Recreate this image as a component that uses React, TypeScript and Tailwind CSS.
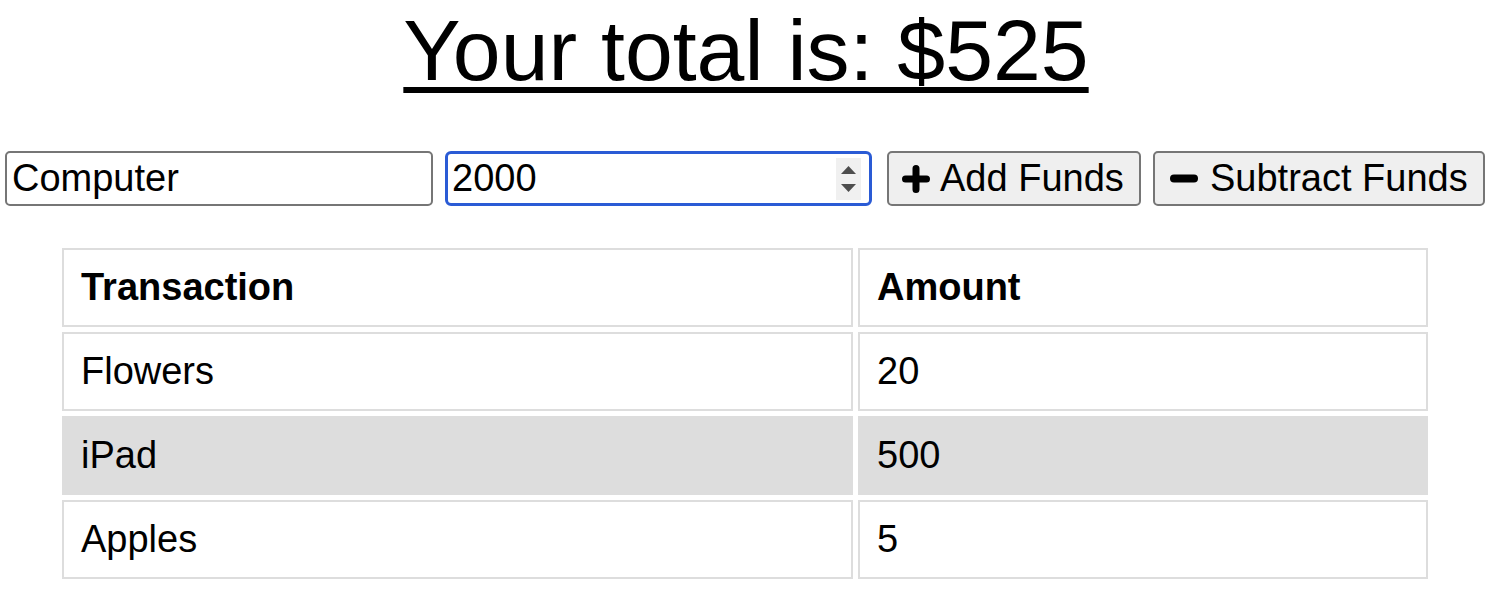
import React, { useState } from 'react';

const rows = [
  { name: 'Flowers', amount: 20 },
  { name: 'iPad', amount: 500 },
  { name: 'Apples', amount: 5 },
];

const PlusIcon = () => (
  <svg width="28" height="28" viewBox="0 0 28 28" className="shrink-0">
    <path d="M14 3.5V24.5M3.5 14H24.5" stroke="black" strokeWidth="7" strokeLinecap="round" />
  </svg>
);

const MinusIcon = () => (
  <svg width="28" height="9" viewBox="0 0 28 9" className="shrink-0">
    <path d="M4 4.5H24" stroke="black" strokeWidth="8" strokeLinecap="round" />
  </svg>
);

export default function App() {
  const [label, setLabel] = useState('Computer');
  const [amount, setAmount] = useState('2000');

  return (
    <div className="w-[1500px] h-[598px] overflow-hidden bg-white text-black font-['Liberation_Sans',Arial,sans-serif]">
      <h1 className="pt-[7px] pr-[8px] text-center text-[86px] leading-[86px] font-normal underline decoration-[6px] underline-offset-[7px]">
        Your total is: $525
      </h1>

      <div className="mt-[58px] flex items-center pl-[5px]">
        <input
          value={label}
          onChange={(e) => setLabel(e.target.value)}
          className="w-[428px] h-[55px] border-2 border-[#767676] rounded-[5px] pl-[5px] text-[38px] outline-none"
        />
        <div className="ml-[12px] w-[427px] h-[55px] flex items-center border-[3px] border-[#2a5bd5] rounded-[6px] pl-[4px] pr-[8px]">
          <input
            value={amount}
            onChange={(e) => setAmount(e.target.value)}
            className="flex-1 min-w-0 h-full text-[38px] outline-none"
          />
          <div className="w-[25px] h-[42px] bg-[#f0f0f0] flex flex-col items-center justify-center gap-[10px]">
            <svg width="15" height="8" viewBox="0 0 15 8">
              <path d="M7.5 0L15 8H0Z" fill="#4d4d4d" />
            </svg>
            <svg width="15" height="8" viewBox="0 0 15 8">
              <path d="M0 0H15L7.5 8Z" fill="#4d4d4d" />
            </svg>
          </div>
        </div>
        <button className="ml-[15px] w-[254px] h-[55px] flex items-center gap-[10px] pl-[13px] border-2 border-[#767676] rounded-[5px] bg-[#efefef] text-[38px]">
          <PlusIcon />
          <span>Add Funds</span>
        </button>
        <button className="ml-[12px] w-[332px] h-[55px] flex items-center gap-[12px] pl-[15px] border-2 border-[#767676] rounded-[5px] bg-[#efefef] text-[38px]">
          <MinusIcon />
          <span>Subtract Funds</span>
        </button>
      </div>

      <table className="mt-[37px] ml-[57px] w-[1376px] table-fixed border-separate border-spacing-[5px] text-[38px]">
        <colgroup>
          <col className="w-[791px]" />
          <col />
        </colgroup>
        <thead>
          <tr>
            <th className="h-[79px] border-2 border-[#dddddd] pl-[17px] pr-[18px] text-left font-bold">Transaction</th>
            <th className="h-[79px] border-2 border-[#dddddd] pl-[17px] pr-[18px] text-left font-bold">Amount</th>
          </tr>
        </thead>
        <tbody>
          {rows.map((r, i) => (
            <tr key={r.name}>
              <td className={`h-[79px] border-2 border-[#dddddd] pl-[17px] pr-[18px] ${i === 1 ? 'bg-[#dddddd]' : ''}`}>{r.name}</td>
              <td className={`h-[79px] border-2 border-[#dddddd] pl-[17px] pr-[18px] ${i === 1 ? 'bg-[#dddddd]' : ''}`}>{r.amount}</td>
            </tr>
          ))}
        </tbody>
      </table>
    </div>
  );
}
